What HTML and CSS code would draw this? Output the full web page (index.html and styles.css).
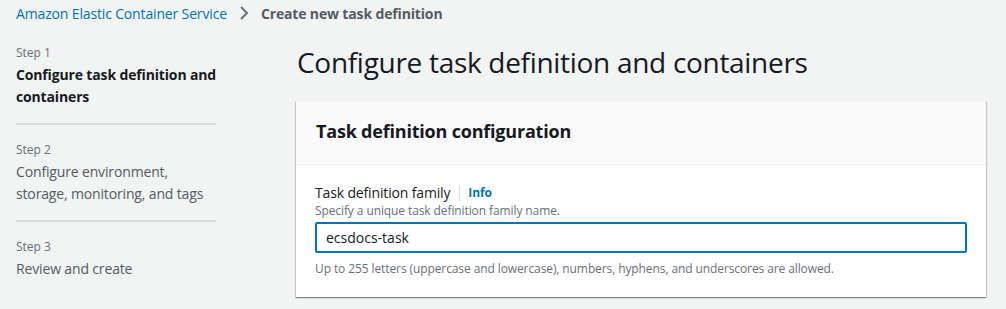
FILE: index.html
```html
<!DOCTYPE html>
<html lang="en">
<head>
<meta charset="utf-8">
<title>Create new task definition</title>
<link rel="stylesheet" href="styles.css">
</head>
<body>
<nav class="breadcrumbs">
  <a class="crumb-link" href="#">Amazon Elastic Container Service</a>
  <svg class="crumb-sep" width="16" height="16" viewBox="0 0 16 16"><path d="M5 2l6 6-6 6" fill="none" stroke="#687078" stroke-width="2"/></svg>
  <span class="crumb-current">Create new task definition</span>
</nav>
<div class="layout">
  <aside class="steps">
    <div class="step">
      <div class="step-num">Step 1</div>
      <div class="step-title active">Configure task definition and containers</div>
    </div>
    <div class="step">
      <div class="step-num">Step 2</div>
      <div class="step-title">Configure environment, storage, monitoring, and tags</div>
    </div>
    <div class="step last">
      <div class="step-num">Step 3</div>
      <div class="step-title">Review and create</div>
    </div>
  </aside>
  <main class="content">
    <h1 class="page-title">Configure task definition and containers</h1>
    <section class="container">
      <header class="container-header">
        <h2>Task definition configuration</h2>
      </header>
      <div class="container-body">
        <div class="field-label">
          <span>Task definition family</span>
          <span class="divider"></span>
          <a class="info" href="#">Info</a>
        </div>
        <div class="field-desc">Specify a unique task definition family name.</div>
        <input class="text-input" type="text" value="ecsdocs-task">
        <div class="field-constraint">Up to 255 letters (uppercase and lowercase), numbers, hyphens, and underscores are allowed.</div>
      </div>
    </section>
  </main>
</div>
</body>
</html>
```

FILE: styles.css
```css
* { box-sizing: border-box; }
html, body {
  margin: 0;
  padding: 0;
  background: #f2f3f3;
  font-family: "Open Sans", "Noto Sans", sans-serif;
  color: #16191f;
  width: 1006px;
  height: 309px;
  overflow: hidden;
}
.breadcrumbs {
  display: flex;
  align-items: center;
  height: 26px;
  padding: 0 0 0 16px;
  font-size: 14px;
  letter-spacing: -0.15px;
}
.crumb-link {
  color: #0073bb;
  text-decoration: none;
}
.crumb-sep {
  margin: 0 9px 0 9px;
}
.crumb-current {
  color: #545b64;
  font-weight: 700;
}
.layout {
  display: flex;
}
.steps {
  width: 200px;
  flex: none;
  margin-left: 16px;
  padding-top: 18px;
}
.step {
  border-bottom: 2px solid #d5dbdb;
  padding-bottom: 15px;
  margin-bottom: 16px;
}
.step.last { border-bottom: none; }
.step-num {
  font-size: 12px;
  color: #687078;
  line-height: 18px;
  margin-bottom: 2px;
}
.step-title {
  font-size: 14px;
  line-height: 22px;
  color: #545b64;
  letter-spacing: -0.15px;
}
.step-title.active {
  color: #16191f;
  font-weight: 700;
}
.content {
  margin-left: 80px;
  width: 690px;
  flex: none;
}
.page-title {
  font-size: 28px;
  font-weight: 400;
  line-height: 36px;
  margin: 18px 0 21px 1px;
  letter-spacing: -0.3px;
}
.container {
  background: #fff;
  box-shadow: 0 1px 1px 0 rgba(0,28,36,0.3), 1px 1px 1px 0 rgba(0,28,36,0.15), -1px 1px 1px 0 rgba(0,28,36,0.15);
}
.container-header {
  background: #fafafa;
  border-bottom: 1px solid #eaeded;
  padding: 18px 20px 21px;
}
.container-header h2 {
  margin: 0;
  font-size: 18px;
  line-height: 24px;
  font-weight: 700;
  letter-spacing: -0.2px;
}
.container-body {
  padding: 18px 19px 20px;
}
.field-label {
  display: flex;
  align-items: center;
  font-size: 14px;
  line-height: 20px;
  letter-spacing: -0.15px;
}
.divider {
  width: 1px;
  height: 16px;
  background: #d5dbdb;
  margin: 0 8px 0 9px;
}
.info {
  color: #0073bb;
  font-weight: 700;
  font-size: 12px;
  text-decoration: none;
}
.field-desc, .field-constraint {
  font-size: 12px;
  line-height: 16px;
  color: #687078;
  letter-spacing: -0.1px;
}
.text-input {
  display: block;
  width: 100%;
  height: 31px;
  margin: 3px 0 8px;
  border: 2px solid #0073bb;
  border-radius: 2px;
  padding: 0 9px;
  font-family: inherit;
  font-size: 14px;
  color: #16191f;
  outline: none;
}
```
